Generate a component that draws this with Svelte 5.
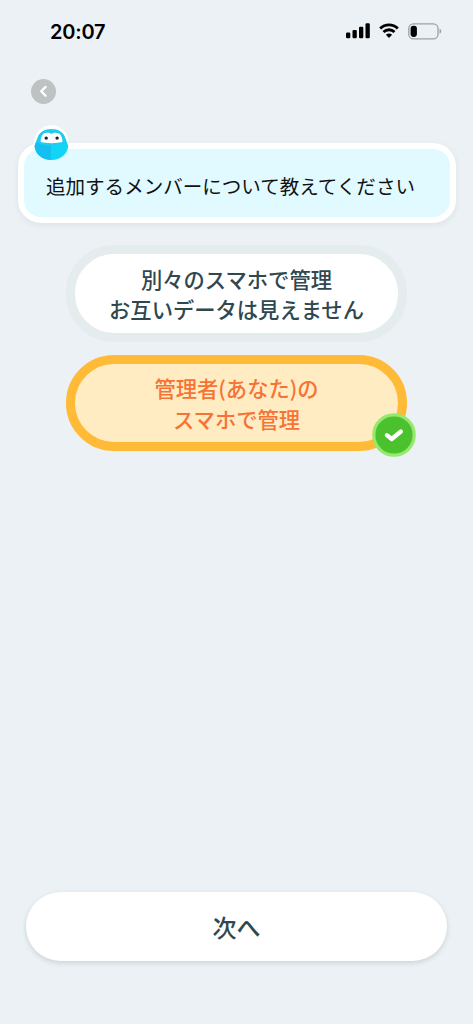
<script>
  let options = [
    { id: "separate", lines: ["別々のスマホで管理", "お互いデータは見えません"] },
    { id: "admin", lines: ["管理者(あなた)の", "スマホで管理"] }
  ];

  let selected = $state("admin");
</script>

<div class="screen">
  <header class="status">
    <span class="time">20:07</span>
    <div class="indicators">
      <svg width="24" height="16" viewBox="0 0 24 16">
        <rect x="0" y="9.6" width="4.3" height="5.7" rx="1.2" />
        <rect x="6.5" y="6.9" width="4.3" height="8.4" rx="1.2" />
        <rect x="13" y="3.7" width="4.3" height="11.6" rx="1.2" />
        <rect x="19.5" y="0.3" width="4.3" height="15" rx="1.2" />
      </svg>
      <svg class="wifi" width="20" height="16" viewBox="0 0 20 16">
        <path d="M1.2 5.5 C6.2 0.7 13.8 0.7 18.8 5.5" />
        <path d="M4.5 9 C7.6 6 12.4 6 15.5 9" />
        <path class="dot" d="M10 14.9 L6.9 11.8 C8.6 10.2 11.4 10.2 13.1 11.8 Z" />
      </svg>
      <svg class="battery" width="34" height="17" viewBox="0 0 34 17">
        <rect class="shell" x="0.8" y="0.8" width="29.2" height="15" rx="4.6" />
        <rect x="2.6" y="2.7" width="6.3" height="11.2" rx="2.8" />
        <path class="cap" d="M31.5 5.8 C33.9 6.8 33.9 9.8 31.5 10.8 Z" />
      </svg>
    </div>
  </header>

  <button class="back" aria-label="戻る">
    <svg width="25" height="25" viewBox="0 0 25 25">
      <path d="M14.6 7.9 L10.2 12.3 L14.6 16.7" />
    </svg>
  </button>

  <div class="bubble">
    <svg class="mascot" width="36" height="38" viewBox="0 0 36 38">
      <circle class="halo" cx="17.4" cy="17.4" r="17.2" />
      <path class="body" d="M17.4 4.300 C24.500 4.300 29.400 7.600 31.200 13 C32.200 16 34.200 19.500 34.200 21.600 C33.200 29.500 26.300 35 17.400 35 C8.500 35 1.600 29.500 0.600 21.600 C0.600 19.500 2.600 16 3.600 13 C5.400 7.600 10.300 4.300 17.400 4.300 Z" />
      <path class="shade" d="M2.300 16.500 C6 19.600 11 20.700 17 20.300 L16.600 35 C8.200 34.800 1.600 29.500 0.600 21.600 C0.600 20 1.500 18.300 2.300 16.500 Z" />
      <path class="top" d="M17.400 4.300 C24.500 4.300 29.400 7.600 31.200 13 L32.500 16.500 C25.500 21.600 9.300 21.600 2.300 16.500 L3.600 13 C5.400 7.600 10.300 4.300 17.400 4.300 Z" />
      <path class="face" d="M17.400 9 C20 7 24.800 7.200 26.600 10 C28 12.200 28.600 14.500 28.400 17 C22 18.500 12.800 18.500 6.800 17 C6.500 14.500 7 12.200 8.300 10 C10.100 7.200 14.900 7 17.400 9 Z" />
      <circle class="eye" cx="12.200" cy="13.100" r="1.700" />
      <circle class="eye" cx="23.100" cy="13.100" r="1.700" />
    </svg>
    <p>追加するメンバーについて教えてください</p>
  </div>

  <div class="options">
    {#each options as option (option.id)}
      <button
        class="option"
        class:selected={selected === option.id}
        onclick={() => (selected = option.id)}
      >
        {#each option.lines as line}
          <span>{line}</span>
        {/each}
        {#if selected === option.id}
          <svg class="check" width="44" height="44" viewBox="0 0 44 44">
            <circle cx="22" cy="22" r="20.200" />
            <path d="M14.800 22.100 L19.700 26 L28.900 18.500" />
          </svg>
        {/if}
      </button>
    {/each}
  </div>

  <button class="next">次へ</button>
</div>

<style>
  :global(body) {
    margin: 0;
    background: #ebf1f4;
  }

  .screen {
    box-sizing: border-box;
    display: flex;
    flex-direction: column;
    height: 1024px;
    padding-bottom: 63px;
    background: #ebf1f4;
    font-family: "Noto Sans CJK JP", sans-serif;
    color: #2f484f;
  }

  button {
    padding: 0;
    border: 0;
    font-family: inherit;
    color: inherit;
    cursor: pointer;
  }

  svg {
    display: block;
    flex: none;
  }

  .status {
    box-sizing: border-box;
    display: flex;
    align-items: center;
    justify-content: space-between;
    height: 62px;
    padding: 0 31px 0 50px;
    color: #000;
  }

  .time {
    padding-top: 2px;
    font-family: Inter, sans-serif;
    font-size: 20px;
    font-weight: 600;
    letter-spacing: -0.2px;
  }

  .indicators {
    display: flex;
    align-items: center;
    gap: 9px;
  }

  .wifi path {
    fill: none;
    stroke: #000;
    stroke-width: 2.9;
  }

  .wifi .dot {
    fill: #000;
    stroke: none;
  }

  .battery .shell {
    fill: none;
    stroke: #9ea2a4;
    stroke-width: 1.3;
  }

  .battery .cap {
    fill: #9ea2a4;
  }

  .back {
    width: 25px;
    height: 25px;
    margin: 16.5px 0 0 31px;
    border-radius: 50%;
    background: #bec2c3;
  }

  .back path {
    fill: none;
    stroke: #fff;
    stroke-width: 2.3;
    stroke-linecap: round;
    stroke-linejoin: round;
  }

  /* Question bubble */
  .bubble {
    position: relative;
    box-sizing: border-box;
    display: flex;
    align-items: center;
    height: 80px;
    margin: 39px 17.5px 0 18px;
    padding: 6px 0 0 22px;
    border: 6.5px solid #fff;
    border-radius: 23px;
    background: #e0faff;
    box-shadow: 0 2px 6px rgba(70, 90, 95, 0.08);
    color: #111;
  }

  .bubble p {
    margin: 0;
    font-size: 19.55px;
    line-height: 28px;
    white-space: nowrap;
  }

  .mascot {
    position: absolute;
    left: 9.5px;
    top: -24px;
  }

  .halo,
  .face {
    fill: #fff;
  }

  .body {
    fill: #11d4f7;
  }

  .shade {
    fill: #12bff0;
  }

  .top {
    fill: #20cbed;
  }

  .eye {
    fill: #16252b;
  }

  /* Choices */
  .options {
    display: flex;
    flex-direction: column;
    gap: 13px;
    margin: 22.5px 66px 0;
  }

  .option {
    position: relative;
    box-sizing: border-box;
    display: flex;
    flex-direction: column;
    align-items: center;
    justify-content: center;
    height: 96.5px;
    padding-top: 2px;
    border: 9px solid #e4ecee;
    border-radius: 48px;
    background: #fff;
    font-size: 21.3px;
    font-weight: 500;
    line-height: 30.5px;
  }

  .option.selected {
    border-color: #ffba38;
    background: #ffecc3;
    color: #f67336;
  }

  .check {
    position: absolute;
    right: -17.5px;
    bottom: -15px;
  }

  .check circle {
    fill: #4bc22d;
    stroke: #97e86c;
    stroke-width: 3.2;
  }

  .check path {
    fill: none;
    stroke: #fff;
    stroke-width: 4.2;
    stroke-linecap: round;
    stroke-linejoin: round;
  }

  .next {
    height: 69px;
    margin: auto 26px 0;
    border-radius: 35px;
    background: #fff;
    box-shadow: 0 2px 5px rgba(60, 85, 90, 0.18);
    font-size: 24px;
    font-weight: 500;
  }
</style>
